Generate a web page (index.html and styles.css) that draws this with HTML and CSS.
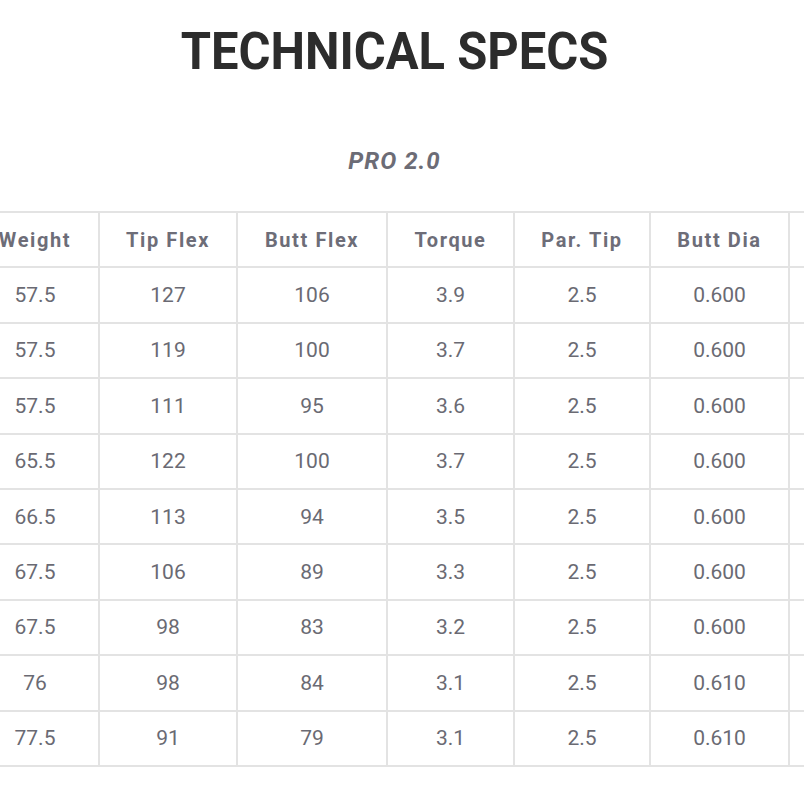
FILE: index.html
```html
<!DOCTYPE html>
<html>
<head>
<meta charset="utf-8">
<link rel="stylesheet" href="styles.css">
</head>
<body>
<section class="specs">
  <h1 class="title">TECHNICAL SPECS</h1>
  <h2 class="model">PRO 2.0</h2>
  <div class="table-wrap">
    <table class="spec-table">
      <colgroup>
        <col class="c-weight"><col class="c-tip"><col class="c-butt"><col class="c-torque"><col class="c-par"><col class="c-dia"><col class="c-extra">
      </colgroup>
      <thead>
        <tr><th>Weight</th><th>Tip Flex</th><th>Butt Flex</th><th>Torque</th><th>Par. Tip</th><th>Butt Dia</th><th></th></tr>
      </thead>
      <tbody>
        <tr><td>57.5</td><td>127</td><td>106</td><td>3.9</td><td>2.5</td><td>0.600</td><td></td></tr>
        <tr><td>57.5</td><td>119</td><td>100</td><td>3.7</td><td>2.5</td><td>0.600</td><td></td></tr>
        <tr><td>57.5</td><td>111</td><td>95</td><td>3.6</td><td>2.5</td><td>0.600</td><td></td></tr>
        <tr><td>65.5</td><td>122</td><td>100</td><td>3.7</td><td>2.5</td><td>0.600</td><td></td></tr>
        <tr><td>66.5</td><td>113</td><td>94</td><td>3.5</td><td>2.5</td><td>0.600</td><td></td></tr>
        <tr><td>67.5</td><td>106</td><td>89</td><td>3.3</td><td>2.5</td><td>0.600</td><td></td></tr>
        <tr><td>67.5</td><td>98</td><td>83</td><td>3.2</td><td>2.5</td><td>0.600</td><td></td></tr>
        <tr><td>76</td><td>98</td><td>84</td><td>3.1</td><td>2.5</td><td>0.610</td><td></td></tr>
        <tr><td>77.5</td><td>91</td><td>79</td><td>3.1</td><td>2.5</td><td>0.610</td><td></td></tr>
      </tbody>
    </table>
  </div>
</section>
</body>
</html>
```
FILE: styles.css
```css
html, body {
  margin: 0;
  padding: 0;
  background: #ffffff;
}
body {
  font-family: Roboto, "Noto Sans", sans-serif;
  width: 804px;
  overflow: hidden;
}
.specs {
  display: flex;
  flex-direction: column;
  align-items: center;
  width: 789px;
}
.title {
  margin: 22px 0 0;
  font-family: Roboto, sans-serif;
  font-weight: 700;
  font-size: 52px;
  line-height: 60px;
  letter-spacing: 0;
  color: #2c2c2c;
  transform: scaleX(0.94);
}
.model {
  margin: 64px 0 0;
  font-family: Roboto, sans-serif;
  font-style: italic;
  font-weight: 700;
  font-size: 24px;
  line-height: 30px;
  letter-spacing: 1px;
  color: #6c6c76;
}
.table-wrap {
  align-self: stretch;
  width: 804px;
  overflow: hidden;
  margin-top: 35px;
}
.spec-table {
  border-collapse: collapse;
  table-layout: fixed;
  margin-left: -30px;
  width: 990px;
}
.c-weight { width: 128px; }
.c-tip { width: 138px; }
.c-butt { width: 150px; }
.c-torque { width: 127px; }
.c-par { width: 136px; }
.c-dia { width: 139px; }
.c-extra { width: 172px; }
.spec-table th,
.spec-table td {
  border: 2px solid #e3e3e3;
  height: 53.4px;
  padding: 0;
  text-align: center;
  vertical-align: middle;
}
.spec-table th {
  font-weight: 700;
  font-size: 20px;
  letter-spacing: 1.6px;
  color: #6d6d78;
}
.spec-table td {
  font-weight: 400;
  font-size: 21px;
  color: #6a6a73;
}
```
